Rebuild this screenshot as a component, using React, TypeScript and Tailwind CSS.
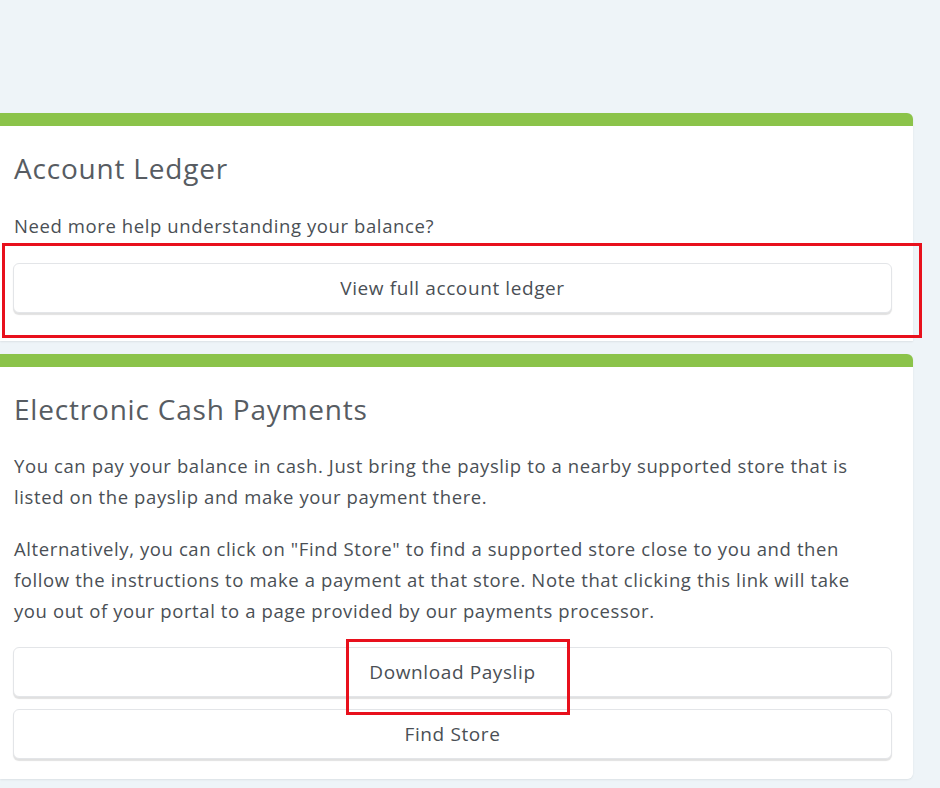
import React from "react";

const font = { fontFamily: "'Open Sans', 'Noto Sans', sans-serif" };

function Btn({ children }: { children: React.ReactNode }) {
  return (
    <div className="h-[50px] w-full rounded-[6px] border border-[#e3e5e8] bg-white shadow-[0_2px_1px_rgba(0,0,0,0.12)] flex items-center justify-center text-[19px] tracking-[0.6px] text-[#4a4f55]">
      {children}
    </div>
  );
}

export default function App() {
  return (
    <div className="w-[940px] h-[788px] bg-[#eef4f8] overflow-hidden relative" style={font}>
      <div className="pt-[113px] w-[913px] flex flex-col gap-[13px]">
        <div className="rounded-tr-[6px] overflow-hidden shadow-[0_1px_2px_rgba(0,0,0,0.08)]">
          <div className="h-[13px] bg-[#8bc34a]" />
          <div className="bg-white pl-[13px] pr-[21px] pt-[24px] pb-[28px]">
            <div className="text-[28px] leading-[36px] tracking-[0.8px] text-[#575c62] pl-[1px]">Account Ledger</div>
            <div className="mt-[27px] text-[18.5px] tracking-[0.6px] leading-[26px] text-[#4a4f55] pl-[1px]">Need more help understanding your balance?</div>
            <div className="mt-[24px]">
              <Btn>View full account ledger</Btn>
            </div>
          </div>
        </div>
        <div className="rounded-tr-[6px] rounded-br-[6px] overflow-hidden shadow-[0_1px_2px_rgba(0,0,0,0.08)]">
          <div className="h-[13px] bg-[#8bc34a]" />
          <div className="bg-white pl-[13px] pr-[21px] pt-[24px] pb-[20px]">
            <div className="text-[28px] leading-[36px] tracking-[0.8px] text-[#575c62] pl-[1px]">Electronic Cash Payments</div>
            <div className="mt-[23px] text-[18.5px] tracking-[0.6px] leading-[31px] text-[#4a4f55] pl-[1px] whitespace-nowrap">
              <div>You can pay your balance in cash. Just bring the payslip to a nearby supported store that is</div>
              <div>listed on the payslip and make your payment there.</div>
            </div>
            <div className="mt-[21px] text-[18.5px] tracking-[0.6px] leading-[31px] text-[#4a4f55] pl-[1px] whitespace-nowrap">
              <div>Alternatively, you can click on "Find Store" to find a supported store close to you and then</div>
              <div>follow the instructions to make a payment at that store. Note that clicking this link will take</div>
              <div>you out of your portal to a page provided by our payments processor.</div>
            </div>
            <div className="mt-[21px] flex flex-col gap-[12px]">
              <Btn>Download Payslip</Btn>
              <Btn>Find Store</Btn>
            </div>
          </div>
        </div>
      </div>
      <div className="absolute left-[2px] top-[243px] w-[920px] h-[95px] border-[3px] border-[#e8101c]" />
      <div className="absolute left-[346px] top-[639px] w-[224px] h-[76px] border-[3px] border-[#e8101c]" />
    </div>
  );
}
